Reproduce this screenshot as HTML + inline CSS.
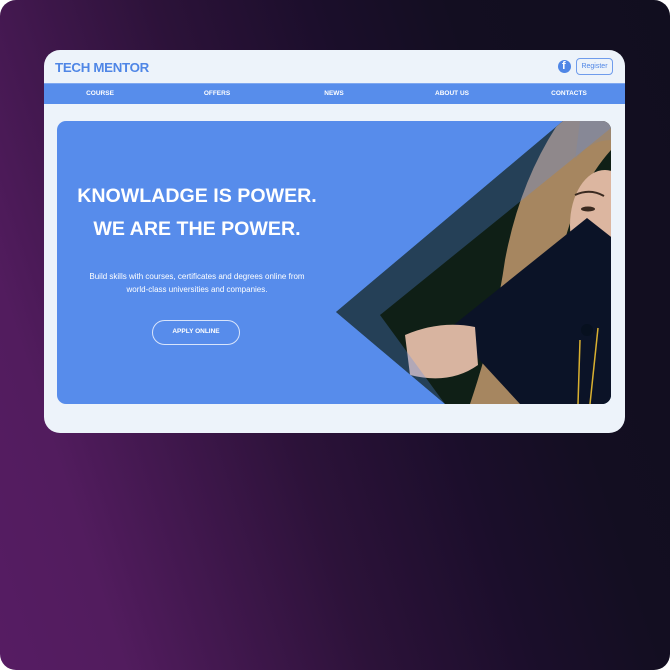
<!DOCTYPE html>
<html><head><style>
*{margin:0;padding:0;box-sizing:border-box}
html,body{width:670px;height:670px;background:#fff;overflow:hidden}
.bg{position:absolute;left:0;top:0;width:670px;height:670px;border-radius:16px;
background:linear-gradient(72deg,#561c63 0%,#521c5e 14%,#2c1239 42%,#1b0e2b 60%,#130e21 75%,#110e1f 100%);}
.card{position:absolute;left:44px;top:50px;width:581px;height:383px;background:#edf3fa;border-radius:16px;overflow:hidden;font-family:"Liberation Sans",sans-serif}
.logo{position:absolute;left:11px;top:10px;font-weight:bold;font-size:13.3px;color:#4f86e6;letter-spacing:-0.3px}
.fb{position:absolute;left:514px;top:10px;width:13px;height:13px;border-radius:50%;background:#4f86e6}
.fb span{position:absolute;left:4px;top:0px;color:#fff;font-weight:bold;font-size:11px}
.reg{position:absolute;left:532px;top:8px;width:37px;height:17px;border:1.5px solid #6f9cec;border-radius:4px;font-size:7px;color:#4f86e6;text-align:center;line-height:15px}
.nav{position:absolute;left:0;top:33px;width:581px;height:21px;background:#578deb;border-top:1px solid #7fa8f0}
.nav span{position:absolute;top:6px;font-size:6.5px;font-weight:bold;color:#fff;transform:translateX(-50%)}
.hero{position:absolute;left:13px;top:71px;width:554px;height:283px;background:#578ceb;border-radius:9px;overflow:hidden}
.h1{position:absolute;left:0;width:280px;text-align:center;color:#fff;font-weight:bold;font-size:19.6px}
.sub{position:absolute;left:0;top:149px;width:280px;text-align:center;color:#fff;font-size:8px;line-height:13px}
.btn{position:absolute;left:95px;top:199px;width:88px;height:25px;border:1.5px solid #d8e4fb;border-radius:13px;color:#fff;font-size:6.5px;font-weight:bold;text-align:center;line-height:22px}
</style></head><body>
<div class="bg"></div>
<div class="card">
<div class="logo">TECH MENTOR</div>
<div class="fb"><span>f</span></div>
<div class="reg">Register</div>
<div class="nav">
<span style="left:56px">COURSE</span><span style="left:173px">OFFERS</span><span style="left:290px">NEWS</span><span style="left:408px">ABOUT US</span><span style="left:525px">CONTACTS</span>
</div>
<div class="hero">
<div class="h1" style="top:64px">KNOWLADGE IS POWER.</div>
<div class="h1" style="top:97px">WE ARE THE POWER.</div>
<div class="sub">Build skills with courses, certificates and degrees online from<br>world-class universities and companies.</div>
<div class="btn">APPLY ONLINE</div>
<svg style="position:absolute;left:0;top:0" width="554" height="283" viewBox="57 121 554 283">
<defs><clipPath id="c"><polygon points="563,121 611,121 611,404 445,404 336,312"/></clipPath></defs>
<g clip-path="url(#c)">
<rect x="330" y="115" width="290" height="300" fill="#0f1f16"/>
<path d="M560,121 Q520,180 505,260 Q495,330 470,404 L540,404 Q545,320 560,260 Q575,190 611,150 L611,121 Z" fill="#a68660"/>
<path d="M580,121 L611,121 L611,140 Q590,140 575,160 Z" fill="#9b8670"/>
<ellipse cx="605" cy="225" rx="35" ry="55" fill="#dcb6a0"/>
<path d="M575,195 Q590,188 604,196" stroke="#3a2a20" stroke-width="2" fill="none"/>
<ellipse cx="588" cy="209" rx="7" ry="2.5" fill="#3a2a20"/>
<polygon points="587,218 615,240 611,404 520,404 450,328" fill="#0b1327"/>
<path d="M405,335 Q440,320 475,327 L478,365 Q450,385 410,375 Z" fill="#d8b4a0"/>
<line x1="580" y1="340" x2="578" y2="404" stroke="#d9b030" stroke-width="1.5"/>
<line x1="598" y1="328" x2="590" y2="404" stroke="#d9b030" stroke-width="1.5"/>
<circle cx="587" cy="330" r="6" fill="#07101f"/>
<polygon points="563,121 611,121 611,128 380,315 445,404 336,312" fill="#5b8ff0" opacity="0.3"/>
</g>
</svg>
</div>
</div>
</body></html>
